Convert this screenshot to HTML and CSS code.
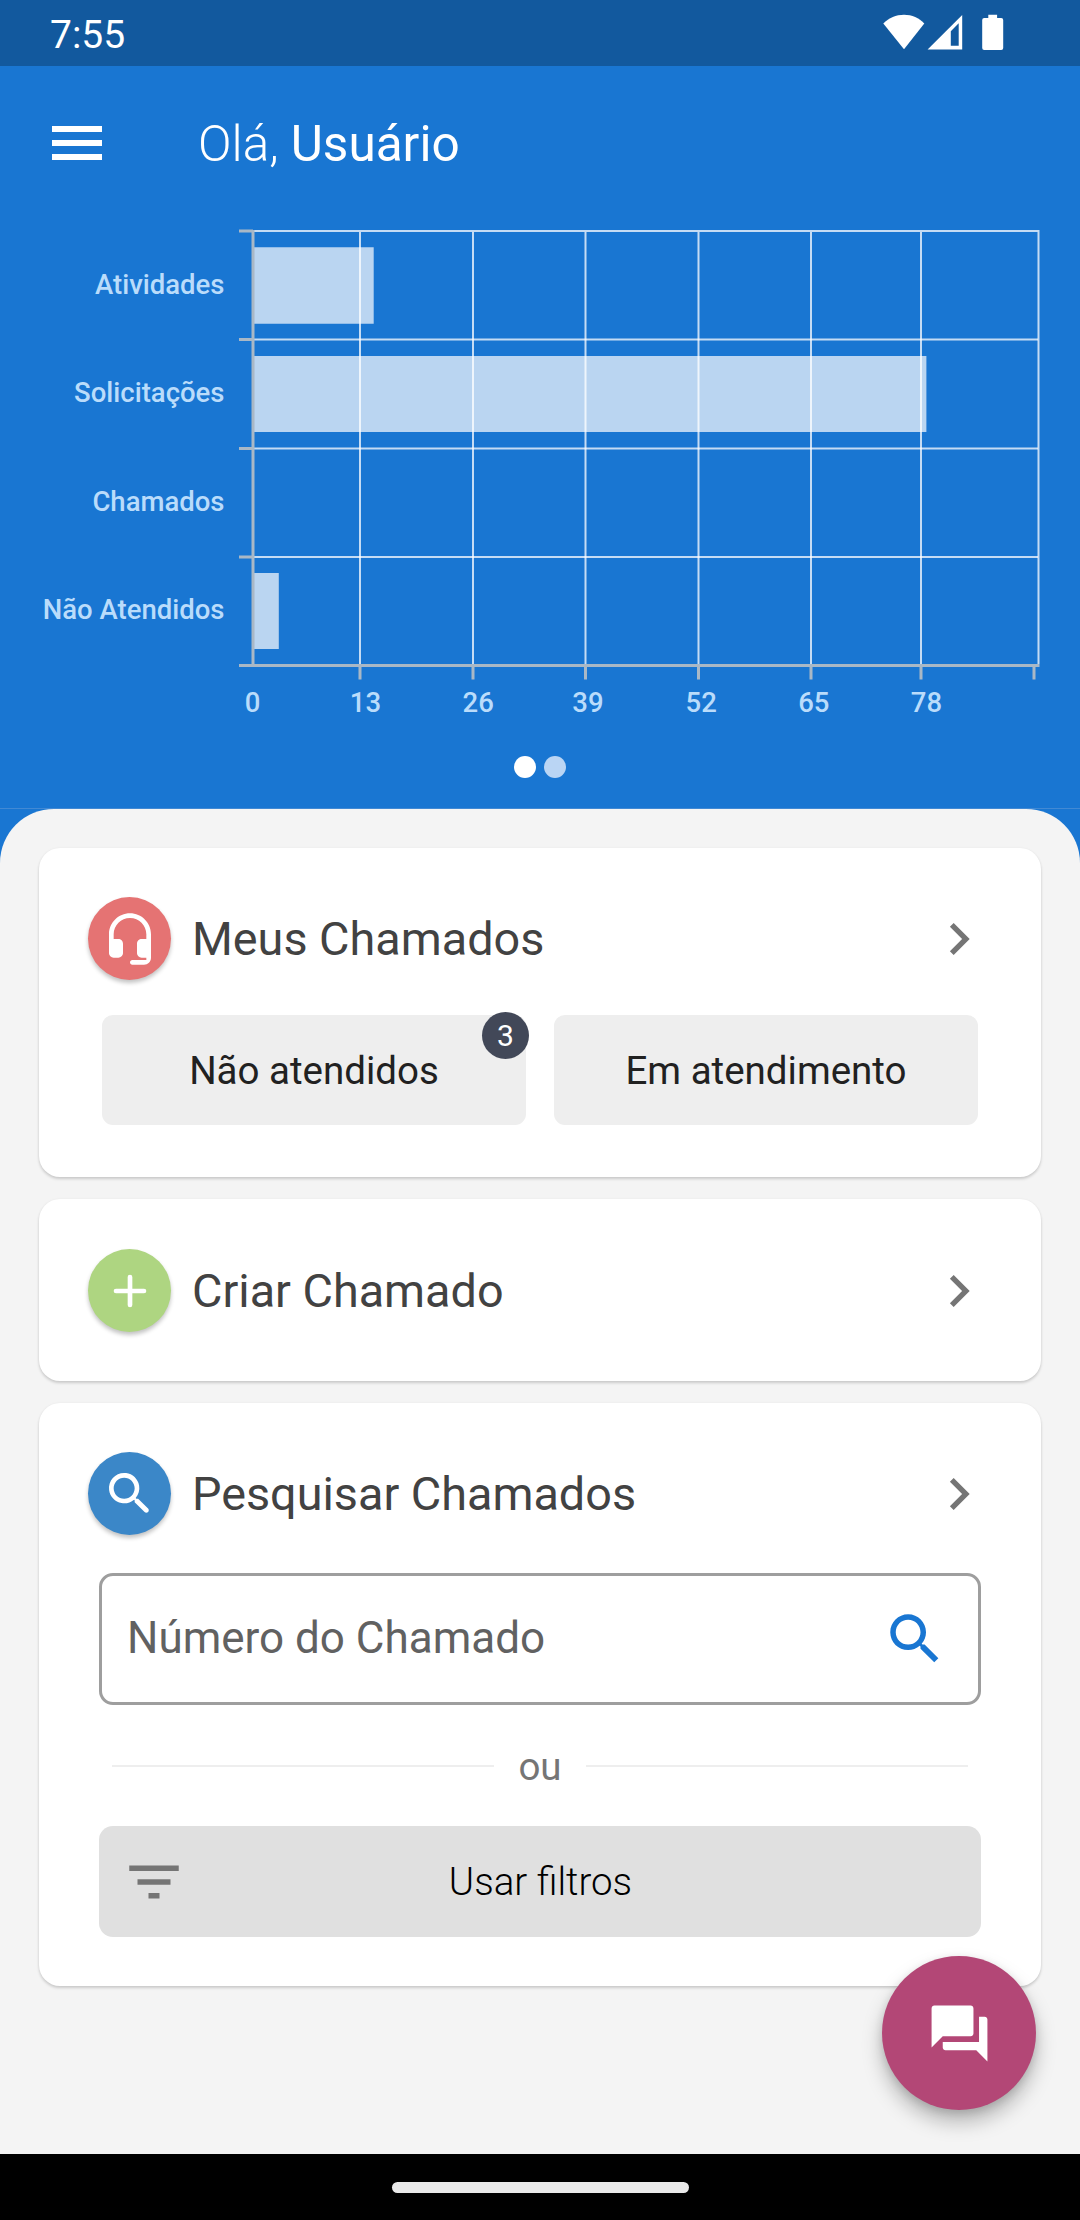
FILE: index.html
```html
<!DOCTYPE html>
<html lang="pt-BR">
<head>
<meta charset="utf-8">
<title>Chamados</title>
<link rel="stylesheet" href="styles.css">
</head>
<body>
<div class="app">
  <div class="status-bar">
    <span class="clock">7:55</span>
    <svg class="status-icons" width="122" height="38" viewBox="0 0 122 38" fill="#fff">
      <path d="M21 35.3 0.3 9.6C6 4 13 0.8 21 0.8s15 3.2 20.3 8.8z"/>
      <path fill-rule="evenodd" d="M79.2 1v34.5H44.6zM75.7 9.2 67.8 17.2V31.8H75.7z"/>
      <path d="M105.3 0.7h8.8v3.4h4.1q2 0 2 2V34q0 2-2 2h-17q-2 0-2-2V6.100q0-2 2-2h4.100z"/>
    </svg>
  </div>

  <header class="app-bar">
    <svg class="menu-icon" width="50" height="34" viewBox="0 0 50 34" fill="#fff"><path d="M0 0h50v6H0zM0 14h50v6H0zM0 28h50v6H0z"/></svg>
    <h1 class="greeting">Olá, <b>Usuário</b></h1>
  </header>

  <section class="summary">
    <svg class="chart" width="1080" height="510" viewBox="0 220 1080 510">
      <g class="bars">
        <path d="M253 247.300H373.700V323.700H253zM253 356H926.400V432H253zM253 573H278.800V649H253z"/>
      </g>
      <g class="grid">
        <path d="M253 231H1039.500M253 339.500H1038M253 448.500H1038M253 557H1038"/>
        <path d="M360 232V664M473 232V664M585.500 232V664M698.500 232V664M811 232V664M921 232V664M1038.500 232V664"/>
      </g>
      <g class="axis">
        <path d="M253 230V665M239 231H253M239 339.500H253M239 448.500H253M239 557H253"/>
        <path d="M239 665.500H1039.500"/>
        <path d="M360 667V679.500M473 667V679.500M585.500 667V679.500M698.500 667V679.500M811 667V679.500M921 667V679.500M1034 667V679.500"/>
      </g>
      <g class="row-labels">
        <text x="224.500" y="294">Atividades</text>
        <text x="224.500" y="402">Solicitações</text>
        <text x="224.500" y="511">Chamados</text>
        <text x="224.500" y="619">Não Atendidos</text>
      </g>
      <g class="col-labels">
        <text x="252.500" y="712">0</text>
        <text x="365.500" y="712">13</text>
        <text x="478.200" y="712">26</text>
        <text x="588" y="712">39</text>
        <text x="701.200" y="712">52</text>
        <text x="813.800" y="712">65</text>
        <text x="926.400" y="712">78</text>
      </g>
    </svg>
    <div class="pager"><i class="dot active"></i><i class="dot"></i></div>
  </section>

  <main class="sheet">
    <article class="card card-mine">
      <div class="card-head">
        <span class="badge-icon red"><svg width="56" height="56" viewBox="0 0 24 24" fill="#fff"><path d="M12 1C7.030 1 3 5.030 3 10v8c0 1.100.9 2 2 2h2c1.100 0 2-.9 2-2v-4c0-1.100-.9-2-2-2H5v-2c0-3.870 3.130-7 7-7s7 3.130 7 7v2h-2c-1.100 0-2 .9-2 2v4c0 1.100.9 2 2 2h2v1h-6c-.55 0-1 .45-1 1s.45 1 1 1h5c1.660 0 3-1.340 3-3V10c0-4.970-4.030-9-9-9z"/></svg></span>
        <h2>Meus Chamados</h2>
        <svg class="chevron" width="64" height="64" viewBox="0 0 24 24"><path d="M10 6 8.590 7.410 13.170 12l-4.580 4.590L10 18l6-6z"/></svg>
      </div>
      <div class="actions">
        <div class="action">Não atendidos<span class="count">3</span></div>
        <div class="action">Em atendimento</div>
      </div>
    </article>

    <article class="card card-create">
      <div class="card-head">
        <span class="badge-icon green"><svg width="56" height="56" viewBox="0 0 24 24" fill="none" stroke="#fff" stroke-width="2" stroke-linecap="round"><path d="M12 6v12M6 12h12"/></svg></span>
        <h2>Criar Chamado</h2>
        <svg class="chevron" width="64" height="64" viewBox="0 0 24 24"><path d="M10 6 8.590 7.410 13.170 12l-4.580 4.590L10 18l6-6z"/></svg>
      </div>
    </article>

    <article class="card card-search">
      <div class="card-head">
        <span class="badge-icon blue"><svg width="56" height="56" viewBox="0 0 24 24" fill="#fff"><path d="M15.500 14h-.79l-.28-.27c1.200-1.400 1.820-3.310 1.480-5.340-.47-2.780-2.790-5-5.590-5.340-4.230-.52-7.790 3.040-7.270 7.270.34 2.800 2.560 5.120 5.340 5.590 2.030.34 3.940-.28 5.340-1.480l.27.28v.79l4.250 4.250c.41.41 1.080.41 1.490 0 .41-.41.41-1.080 0-1.490L15.500 14zm-6 0C7.010 14 5 11.990 5 9.500S7.010 5 9.500 5 14 7.010 14 9.500 11.990 14 9.500 14z"/></svg></span>
        <h2>Pesquisar Chamados</h2>
        <svg class="chevron" width="64" height="64" viewBox="0 0 24 24"><path d="M10 6 8.590 7.410 13.170 12l-4.580 4.590L10 18l6-6z"/></svg>
      </div>
      <div class="field">
        <span>Número do Chamado</span>
        <svg width="66" height="66" viewBox="0 0 24 24" fill="#1976d2"><path d="M15.500 14h-.79l-.28-.27C15.410 12.590 16 11.110 16 9.500 16 5.910 13.090 3 9.500 3S3 5.910 3 9.500 5.910 16 9.500 16c1.610 0 3.090-.59 4.230-1.570l.27.28v.79l5 4.990L20.490 19l-4.990-5zm-6 0C7.010 14 5 11.990 5 9.500S7.010 5 9.500 5 14 7.010 14 9.500 11.990 14 9.500 14z"/></svg>
      </div>
      <div class="separator"><span>ou</span></div>
      <div class="filters">
        <svg width="66" height="66" viewBox="0 0 24 24" fill="#757575"><path d="M10 18h4v-2h-4v2zM3 6v2h18V6H3zm3 7h12v-2H6v2z"/></svg>
        <span>Usar filtros</span>
      </div>
    </article>
  </main>

  <div class="nav-bar"><i></i></div>

  <div class="fab"><svg width="67" height="67" viewBox="0 0 24 24" fill="#fff"><path d="M21 6h-2v9H6v2c0 .55.45 1 1 1h11l4 4V7c0-.55-.45-1-1-1zm-4 6V3c0-.55-.45-1-1-1H3c-.55 0-1 .45-1 1v14l4-4h10c.55 0 1-.45 1-1z"/></svg></div>
</div>
</body>
</html>
```

FILE: styles.css
```css
* {
  box-sizing: border-box;
}

body {
  margin: 0;
  font-family: Roboto, sans-serif;
}

svg {
  display: block;
  flex: none;
}

.app {
  position: relative;
  display: flex;
  flex-direction: column;
  width: 1080px;
  height: 2220px;
  overflow: hidden;
  background: #1976d2;
}

/* Top bars */
.status-bar {
  display: flex;
  align-items: center;
  justify-content: space-between;
  height: 66px;
  padding: 0 75px 0 50px;
  background: #12599e;
  color: #fff;
}

.clock {
  font-size: 39px;
  line-height: 46px;
  padding-top: 4px;
}

.app-bar {
  display: flex;
  align-items: center;
  gap: 96px;
  height: 154px;
  padding-left: 52px;
}

.greeting {
  margin: 0;
  padding-top: 2px;
  font-size: 49.5px;
  font-weight: 300;
  line-height: 60px;
  color: #fff;
}

.greeting b {
  font-weight: 400;
}

/* Chart */
.summary {
  height: 589px;
  border-bottom: 1px solid #4189d4;
}

.bars {
  fill: #bad5f1;
}

.grid {
  fill: none;
  stroke: #fff;
  stroke-opacity: 0.75;
  stroke-width: 2;
}

.axis {
  fill: none;
  stroke: #a9b8c6;
  stroke-width: 3;
}

.row-labels,
.col-labels {
  fill: #badcfb;
  font-size: 27.5px;
  font-weight: 500;
}

.row-labels {
  text-anchor: end;
}

.col-labels {
  text-anchor: middle;
}

.pager {
  display: flex;
  justify-content: center;
  gap: 8px;
  padding-top: 26px;
}

.dot {
  width: 22px;
  height: 22px;
  border-radius: 50%;
  background: #bad5f4;
}

.dot.active {
  background: #fff;
}

/* Cards */
.sheet {
  flex: 1;
  display: flex;
  flex-direction: column;
  gap: 22px;
  padding: 39px 39px 0;
  border-radius: 54px 54px 0 0;
  background: #f4f4f4;
}

.card {
  padding: 49px 60px 0 49px;
  border-radius: 21px;
  background: #fff;
  box-shadow: 0 2px 3px rgba(0, 0, 0, 0.17), 0 0 3px rgba(0, 0, 0, 0.04);
}

.card-mine {
  height: 329px;
}

.card-create {
  height: 182px;
  padding-top: 50px;
}

.card-search {
  height: 583px;
}

.card-head {
  display: flex;
  align-items: center;
  height: 83px;
}

.card-head h2 {
  flex: 1;
  margin: 0 0 0 21px;
  font-size: 46.75px;
  font-weight: 400;
  line-height: 56px;
  color: #424242;
}

.chevron {
  margin-right: -10px;
  fill: #757575;
}

.badge-icon {
  display: grid;
  place-items: center;
  width: 83px;
  height: 83px;
  border-radius: 50%;
  box-shadow: 0 3px 4px rgba(0, 0, 0, 0.24);
}

.badge-icon.red {
  background: #e57373;
}

.badge-icon.green {
  background: #aed581;
}

.badge-icon.blue {
  background: #3b87c8;
}

.actions {
  display: flex;
  gap: 28px;
  margin: 35px 3px 0 14px;
}

.action {
  position: relative;
  flex: 1;
  display: grid;
  place-items: center;
  height: 110px;
  border-radius: 11px;
  background: #eee;
  font-size: 38.5px;
  color: #212121;
}

.count {
  position: absolute;
  top: -3px;
  right: -3px;
  width: 47px;
  height: 47px;
  border-radius: 50%;
  background: #424858;
  color: #fff;
  font-size: 30px;
  line-height: 48px;
  text-align: center;
}

.field {
  display: flex;
  align-items: center;
  justify-content: space-between;
  height: 132px;
  margin: 38px 0 0 11px;
  padding: 0 30px 0 25px;
  border: 3px solid #9e9e9e;
  border-radius: 14px;
  font-size: 44px;
  line-height: 52px;
  color: #616161;
}

.field span {
  margin-top: -2px;
}

.separator {
  display: flex;
  align-items: center;
  gap: 24px;
  height: 121px;
  margin: 0 13px 0 24px;
  font-size: 38.5px;
  line-height: 46px;
  color: #757575;
}

.separator span {
  padding-top: 2px;
}

.separator::before,
.separator::after {
  content: "";
  flex: 1;
  height: 2px;
  background: #eee;
}

.filters {
  display: grid;
  grid-template-columns: 66px 1fr 66px;
  align-items: center;
  height: 111px;
  margin-left: 11px;
  padding: 0 21px 0 22px;
  border-radius: 14px;
  background: #e0e0e0;
  color: #000;
  font-size: 38.5px;
  font-weight: 300;
  text-align: center;
}

/* Overlays and system navigation */
.fab {
  position: absolute;
  right: 44px;
  bottom: 110px;
  display: grid;
  place-items: center;
  width: 154px;
  height: 154px;
  border-radius: 50%;
  background: #b34776;
  box-shadow: 0 12px 20px rgba(0, 0, 0, 0.26), 0 3px 8px rgba(0, 0, 0, 0.12);
}

.nav-bar {
  display: grid;
  place-items: center;
  height: 66px;
  background: #000;
}

.nav-bar i {
  width: 297px;
  height: 11px;
  border-radius: 6px;
  background: #eaeaea;
}
```
